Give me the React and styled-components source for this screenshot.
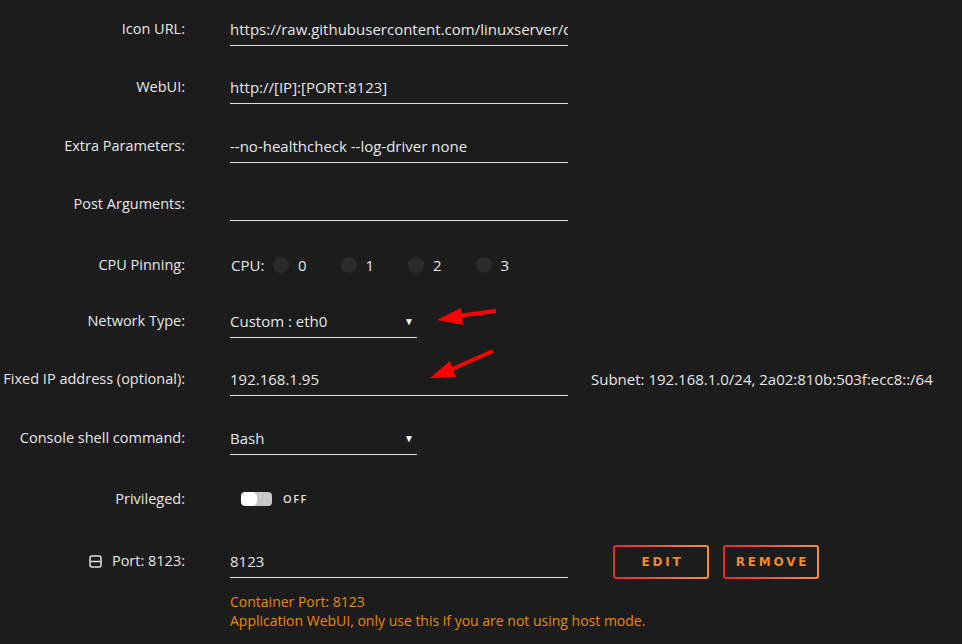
import React from "react";
import styled, { createGlobalStyle } from "styled-components";

const GlobalStyle = createGlobalStyle`
  html, body {
    margin: 0;
    padding: 0;
    background: #1c1c1c;
  }
  body {
    font-family: "Open Sans", "Liberation Sans", sans-serif;
    color: #e6e6e6;
    font-size: 15px;
  }
`;

const Page = styled.div`
  position: relative;
  width: 962px;
  height: 644px;
  overflow: hidden;
  background: #1c1c1c;
`;

const Form = styled.div`
  display: flex;
  flex-direction: column;
`;

const Row = styled.div`
  display: grid;
  grid-template-columns: 185px 338px auto;
  column-gap: 45px;
  align-items: start;
  height: ${(p) => p.h || 58.5}px;
  padding-top: ${(p) => p.top || 12.5}px;
  box-sizing: border-box;
`;

const Label = styled.div`
  text-align: right;
  line-height: 32px;
  font-size: 14.5px;
  white-space: nowrap;
  display: flex;
  justify-content: flex-end;
  align-items: center;
  gap: 10px;
`;

const Field = styled.div`
  height: 32px;
  line-height: 32px;
  width: ${(p) => p.w || 338}px;
  border-bottom: 1px solid #e0e0e0;
  white-space: nowrap;
  overflow: hidden;
  box-sizing: content-box;
  display: flex;
  justify-content: space-between;
  align-items: center;
`;

const Caret = styled.span`
  font-size: 10px;
  margin-right: 3px;
  color: #ffffff;
`;

const Side = styled.div`
  line-height: 32px;
  white-space: nowrap;
  margin-left: -22px;
`;

const CpuList = styled.div`
  display: flex;
  align-items: center;
  height: 32px;
  padding-left: 1px;
`;

const CpuTag = styled.span`
  width: 42px;
`;

const CpuItem = styled.div`
  display: flex;
  align-items: center;
  width: 67.5px;
`;

const Dot = styled.span`
  width: 16px;
  height: 16px;
  border-radius: 50%;
  background: #2b2b2b;
  margin-right: 9px;
`;

const ToggleWrap = styled.div`
  display: flex;
  align-items: center;
  height: 32px;
  padding-left: 11px;
  gap: 11px;
`;

const Track = styled.span`
  position: relative;
  width: 31px;
  height: 14px;
  border-radius: 4px;
  background: #c8c8c8;
`;

const Knob = styled.span`
  position: absolute;
  left: 0;
  top: 0;
  width: 16px;
  height: 14px;
  border-radius: 5px;
  background: #fff;
`;

const OffText = styled.span`
  font-size: 11px;
  letter-spacing: 1.5px;
  font-weight: 600;
  color: #e0e0e0;
`;

const Buttons = styled.div`
  display: flex;
  gap: 14px;
`;

const Button = styled.button`
  width: 96px;
  height: 34px;
  border: 2px solid transparent;
  border-radius: 3px;
  background: linear-gradient(#1c1c1c, #1c1c1c) padding-box,
    linear-gradient(90deg, #e22828, #ff8c2f) border-box;
  color: #f08a2e;
  font-family: "DejaVu Sans", sans-serif;
  font-weight: bold;
  font-size: 12px;
  letter-spacing: 2.8px;
  padding: 0 0 0 3px;
  cursor: pointer;
`;

const Notes = styled.div`
  margin-left: 230px;
  margin-top: 2px;
  color: #e68a00;
  font-size: 14px;
  line-height: 19px;
`;

const Arrows = styled.svg`
  position: absolute;
  left: 0;
  top: 0;
  pointer-events: none;
`;

const MinusBox = () => (
  <svg width="13" height="13" viewBox="0 0 13 13">
    <rect x="1" y="1" width="11" height="11" rx="2" fill="none" stroke="#e0e0e0" strokeWidth="1.5" />
    <line x1="1.5" y1="6.5" x2="11.5" y2="6.5" stroke="#e0e0e0" strokeWidth="1.5" />
  </svg>
);

const textRows = [
  ["Icon URL:", "https://raw.githubusercontent.com/linuxserver/docker-templates/master/linuxserver.io/img/homeassistant-logo.png"],
  ["WebUI:", "http://[IP]:[PORT:8123]"],
  ["Extra Parameters:", "--no-healthcheck --log-driver none"],
  ["Post Arguments:", ""],
];

export default function App() {
  return (
    <Page>
      <GlobalStyle />
      <Form>
        {textRows.map(([label, value]) => (
          <Row key={label}>
            <Label>{label}</Label>
            <Field>{value}</Field>
          </Row>
        ))}
        <Row h={60} top={14.5}>
          <Label>CPU Pinning:</Label>
          <CpuList>
            <CpuTag>CPU:</CpuTag>
            {[0, 1, 2, 3].map((n) => (
              <CpuItem key={n}>
                <Dot />
                {n}
              </CpuItem>
            ))}
          </CpuList>
        </Row>
        <Row h={57.5} top={10.5}>
          <Label>Network Type:</Label>
          <Field w={187}>
            Custom : eth0
            <Caret>▼</Caret>
          </Field>
        </Row>
        <Row top={11.5}>
          <Label>Fixed IP address (optional):</Label>
          <Field>192.168.1.95</Field>
          <Side>Subnet: 192.168.1.0/24, 2a02:810b:503f:ecc8::/64</Side>
        </Row>
        <Row h={59} top={11.5}>
          <Label>Console shell command:</Label>
          <Field w={187}>
            Bash
            <Caret>▼</Caret>
          </Field>
        </Row>
        <Row h={63} top={13.5}>
          <Label>Privileged:</Label>
          <ToggleWrap>
            <Track>
              <Knob />
            </Track>
            <OffText>OFF</OffText>
          </ToggleWrap>
        </Row>
        <Row h={58} top={13}>
          <Label>
            <MinusBox />
            Port: 8123:
          </Label>
          <Field>8123</Field>
          <Buttons>
            <Button>EDIT</Button>
            <Button>REMOVE</Button>
          </Buttons>
        </Row>
        <Notes>
          Container Port: 8123
          <br />
          Application WebUI, only use this if you are not using host mode.
        </Notes>
      </Form>
      <Arrows width="962" height="644">
        <line x1="496" y1="311" x2="458" y2="316" stroke="#ff0000" strokeWidth="4" />
        <polygon points="437,320 461,308 463,325" fill="#ff0000" />
        <line x1="493" y1="351" x2="450" y2="370" stroke="#ff0000" strokeWidth="4" />
        <polygon points="430,378 450,361 456,377" fill="#ff0000" />
      </Arrows>
    </Page>
  );
}
